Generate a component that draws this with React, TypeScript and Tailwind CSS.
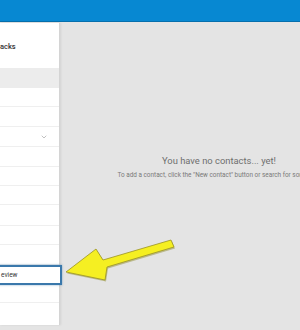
import { ChevronDown } from 'lucide-react';

const rowHeights = [19, 20, 20, 20, 19, 19, 21, 19, 20];

const App = () => {
  return (
    <div className="relative w-[300px] h-[330px] overflow-hidden bg-[#e4e4e4] font-['Roboto','Liberation_Sans',sans-serif]">
      {/* Top bar */}
      <div className="h-[22px] w-full bg-[#0788d2] border-b border-[#066fac]" />

      <div className="flex w-[378px] pt-[1px]">
        {/* Sidebar */}
        <div className="w-[60px] shrink-0 h-[302px] bg-white border-r border-[#d4d4d4] shadow-[1px_0_2px_rgba(0,0,0,0.08)]">
          <div className="h-[45px] flex items-center">
            <span className="text-[7.5px] font-medium text-[#333] leading-none mt-[3px]">acks</span>
          </div>
          <div className="h-[20px] bg-[#ececec]" />

          {rowHeights.map((h, i) => (
            <div
              key={i}
              className="border-b border-[#efefef] flex items-center justify-end pr-[11px]"
              style={{ height: h }}
            >
              {i === 2 && <ChevronDown size={8} strokeWidth={2.5} className="text-[#b5b5b5]" />}
            </div>
          ))}

          {/* Focused input */}
          <div className="-ml-[3px] w-[65px] h-[20px] border-2 border-[#3a78ab] bg-white flex items-center pl-[2px] shadow-[0_0_2px_rgba(58,120,171,0.6)]">
            <span className="text-[6.5px] text-[#333] leading-none">eview</span>
          </div>

          <div className="h-[18px] border-b border-[#efefef]" />
          <div className="h-[22px]" />
        </div>

        {/* Main area */}
        <div className="flex-1 flex flex-col items-center pt-[132px]">
          <div className="text-[9.4px] leading-[11px] text-[#6f6f6f] whitespace-nowrap">
            You have no contacts... yet!
          </div>
          <div className="mt-[5px] text-[6.4px] leading-[8px] text-[#7a7a7a] whitespace-nowrap">
            To add a contact, click the "New contact" button or search for someone.
          </div>
        </div>
      </div>

      {/* Annotation arrow */}
      <svg className="absolute left-0 top-0 pointer-events-none" width="300" height="330" viewBox="0 0 300 330">
        <polygon
          points="66,272 96,249 103,260 171,240 174,247 107,267 105,280"
          fill="#8a8420"
          opacity="0.45"
          transform="translate(1,1.5)"
        />
        <polygon
          points="66,272 96,249 103,260 171,240 174,247 107,267 105,280"
          fill="#f5ef22"
          stroke="#9a9322"
          strokeWidth="0.8"
          strokeLinejoin="round"
        />
      </svg>
    </div>
  );
};

export default App;
